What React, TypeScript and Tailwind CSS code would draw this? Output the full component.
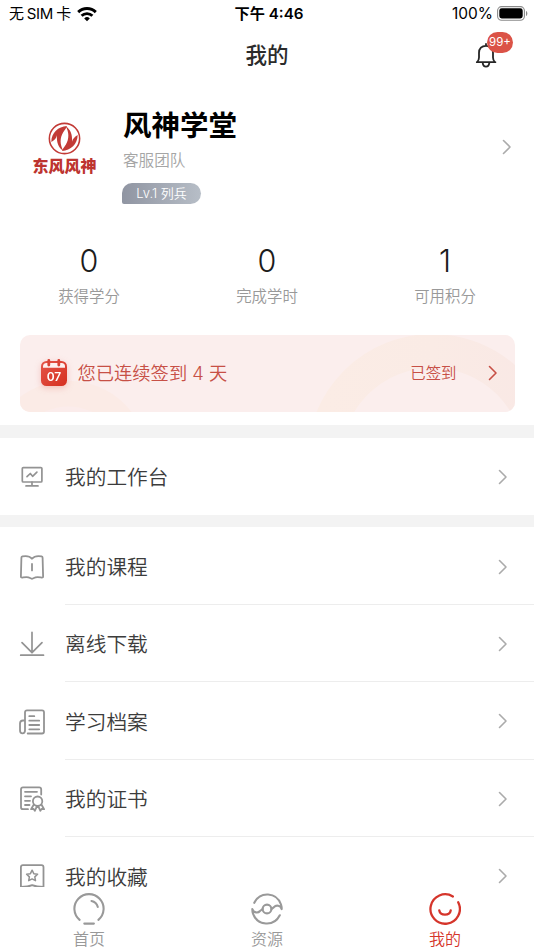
import React from "react";

type IconProps = { className?: string };

const stroke = {
  fill: "none",
  stroke: "currentColor",
  strokeLinecap: "round" as const,
  strokeLinejoin: "round" as const,
};

function Chevron({ className = "" }: IconProps) {
  return (
    <svg viewBox="0 0 10 16" className={`h-4 w-2.5 ${className}`} {...stroke} strokeWidth={1.6}>
      <path d="M1.5 1.5 8 8l-6.5 6.5" />
    </svg>
  );
}

function Wifi() {
  return (
    <svg viewBox="0 0 20 16" className="h-4 w-5" fill="none" stroke="black" strokeWidth={2.9}>
      <path d="M1.2 6.1a12.6 12.6 0 0 1 17.6 0" />
      <path d="M4.6 9.8a7.8 7.8 0 0 1 10.8 0" />
      <path d="M10 15.2 7.2 12.4a4 4 0 0 1 5.6 0z" fill="black" stroke="none" />
    </svg>
  );
}

function Battery() {
  return (
    <svg viewBox="0 0 32 15" className="h-[15px] w-8">
      <rect x=".6" y=".6" width="26.8" height="13.6" rx="4" fill="none" stroke="#8a8a8a" strokeWidth="1.1" />
      <rect x="2.3" y="2.3" width="23.4" height="10.2" rx="2.4" fill="#000" />
      <path d="M29 5v5c1.8-.6 1.8-4.4 0-5z" fill="#8a8a8a" />
    </svg>
  );
}

function Bell() {
  return (
    <svg viewBox="0 0 22 26" className="h-[26px] w-[22px] text-[#262626]" {...stroke} strokeWidth={1.8}>
      <path d="M1.8 20.2h18.6M2.2 19.9c1.4-1.3 1.8-2.4 1.8-4.3v-4.8c0-4.2 2.7-7 7-7s7 2.8 7 7v4.8c0 1.9.4 3 1.8 4.3M11 3.5V2M7.7 20.8c.3 2.6 1.5 3.8 3.3 3.8s3-1.2 3.3-3.8" />
    </svg>
  );
}

function Logo() {
  return (
    <svg viewBox="0 0 34 34" className="h-[33px] w-[33px]">
      <circle cx="17" cy="17" r="15.6" fill="none" stroke="#c23a36" strokeWidth="1.6" />
      <path d="M19.5 4.2C10.5 4.8 3.6 11 3.4 20.6 7 18.4 8.6 16.5 9.2 13.6c-.4 6.8 1.2 12.6 6.6 16-3.6-6.3-3.8-12.8-.1-19C17 8.3 18.8 7 19.5 4.2z" fill="#c23a36" />
      <path d="M14.5 29.8c9-.6 15.9-6.8 16.1-16.4-3.6 2.2-5.2 4.1-5.8 7 .4-6.8-1.2-12.6-6.6-16 3.6 6.3 3.8 12.8.1 19-1.3 2.3-3.1 3.6-3.8 6.4z" fill="#c23a36" />
    </svg>
  );
}

function CalendarIcon() {
  return (
    <svg viewBox="0 0 28 30" className="h-[30px] w-7 drop-shadow-[0_2px_3px_rgba(220,70,60,0.25)]">
      <defs>
        <linearGradient id="calendar" x1="0" y1="0" x2="1" y2="1">
          <stop offset="0" stopColor="#e45649" />
          <stop offset="1" stopColor="#d62f20" />
        </linearGradient>
      </defs>
      <rect x="1" y="3" width="26" height="25" rx="5.5" fill="url(#calendar)" />
      <path d="M3 9.8V8.5Q3 5 6.5 5h15Q25 5 25 8.5v1.3z" fill="#fdf1ef" />
      <path d="M8.8 2.5v4.5M18.8 2.5v4.5" stroke="#da4436" strokeWidth="2.8" strokeLinecap="round" />
      <text x="14" y="23" textAnchor="middle" className="font-['Inter'] text-[12px] font-semibold" fill="#fff">07</text>
    </svg>
  );
}

function WorkIcon() {
  return (
    <svg viewBox="0 0 26 26" className="h-[26px] w-[26px]" {...stroke} strokeWidth={1.7}>
      <rect x="3.3" y="3.6" width="19.6" height="14.4" rx="1" />
      <path d="M8 12.7 11.3 9.5l2.3 2.8 4.3-4.1M13 18v3.4M7 21.9h12" />
    </svg>
  );
}

function BookIcon() {
  return (
    <svg viewBox="0 0 26 26" className="h-[26px] w-[26px]" {...stroke} strokeWidth={1.8}>
      <path d="M13 4.7C10.5 1.8 6.8 1.7 3.4 2.4Q2.4 2.6 2.4 3.8L1.9 22.4q0 1.4 1.4 1.2c2.8-.5 5.3-1.2 7.7.3q2 1.6 4 0c2.4-1.5 4.9-.8 7.7-.3q1.4.2 1.4-1.2l-.5-18.6q0-1.2-1-1.4c-3.4-.7-7.1-.6-9.6 2.3zM13 10v6.4" />
    </svg>
  );
}

function DownloadIcon() {
  return (
    <svg viewBox="0 0 26 26" className="h-[26px] w-[26px]" {...stroke} strokeWidth={1.7}>
      <path d="M13 1.3v20.4M3 11.6l10 10 10-10M1.7 24.2h22.8" />
    </svg>
  );
}

function ArchiveIcon() {
  return (
    <svg viewBox="0 0 26 26" className="h-[26px] w-[26px]" {...stroke} strokeWidth={1.8}>
      <path d="M6 22V3.3q0-2 2-2h15q2 0 2 2v19.2q0 2-2 2H8.7M5.8 11.5H4q-3 0-3 3v6.7c0 4.2 5 4.2 5 0V11.5M10.3 7.2h5M10.3 11.7h9.9M10.3 16h9.9M10.3 20.3h9.9" />
    </svg>
  );
}

function CertificateIcon() {
  return (
    <svg viewBox="0 0 26 26" className="h-[26px] w-[26px]" {...stroke} strokeWidth={1.8}>
      <path d="M22.2 8.5V3.4q0-2-2-2H4q-2 0-2 2v17.8q0 2 2 2h5M6 5.8h12M6 10.3h6M6 14.8h5M6 19h4.5" />
      <circle cx="18.6" cy="15.2" r="4.7" />
      <path d="m14.8 18.5-2.7 4.7 2.5-.3 1.2 2 2.1-4.6M22.4 18.5l2.7 4.7-2.5-.3-1.2 2-2.1-4.6" />
    </svg>
  );
}

function FavoriteIcon() {
  return (
    <svg viewBox="0 0 26 26" className="h-[26px] w-[26px]" {...stroke} strokeWidth={1.8}>
      <path d="M1.9 23V3.2q0-2 2-2h18.6q2 0 2 2V23c-4 0-8-.4-11.3-1.8C9.9 22.6 5.9 23 1.9 23z" />
      <path d="m13.1 6.2 1.7 3.5 3.8.5-2.8 2.7.7 3.8-3.4-1.8-3.4 1.8.7-3.8-2.8-2.7 3.8-.5z" strokeWidth={1.5} />
    </svg>
  );
}

function HomeIcon() {
  return (
    <svg viewBox="0 0 32 32" className="h-8 w-8" {...stroke} strokeWidth={2.1}>
      <path d="M6.6 26.9a14.6 14.6 0 1 1 18.8 0" />
      <path d="M18.5 8q5 1 6.3 6M11.3 30.6h9.6" />
    </svg>
  );
}

function ResourceIcon() {
  return (
    <svg viewBox="0 0 32 32" className="h-8 w-8" {...stroke} strokeWidth={2.1}>
      <path d="M3.3 9.8C9-2 25.5-1.2 30 11.5q.7 2 .7 4.6c-1.2-4-5.7-4.4-7.7-2l-2.6 2" />
      <path d="M28.8 22.3C23 34 6.5 33 2 20.6q-.7-2-.7-4.6c1.2 4 5.7 4.4 7.7 2l2.6-2" />
      <circle cx="16" cy="16" r="4.4" />
    </svg>
  );
}

function MineIcon() {
  return (
    <svg viewBox="0 0 32 32" className="h-8 w-8" {...stroke} strokeWidth={2.3}>
      <path d="M23.9 3.5A14.7 14.7 0 1 0 29.2 9.2M10.3 17.5c1 5.6 10.4 5.6 11.4 0" />
    </svg>
  );
}

function MenuRow({ label, icon, line = false }: { label: string; icon: React.ReactNode; line?: boolean }) {
  return (
    <div className="flex h-[77.4px] shrink-0 pl-[19px] text-[#939393]">
      <div className="flex w-[46px] items-center pt-[2px]">{icon}</div>
      <div className={`flex flex-1 items-center justify-between border-b pt-[2px] pr-[26px] ${line ? "border-[#ededed]" : "border-transparent"}`}>
        <span className="pt-[3px] text-[20.7px] leading-7 text-[#3c3c3c]">{label}</span>
        <Chevron className="text-[#ababab]" />
      </div>
    </div>
  );
}

const stats = [
  ["0", "获得学分"],
  ["0", "完成学时"],
  ["1", "可用积分"],
];

const courses = [
  { label: "我的课程", icon: <BookIcon /> },
  { label: "离线下载", icon: <DownloadIcon /> },
  { label: "学习档案", icon: <ArchiveIcon /> },
  { label: "我的证书", icon: <CertificateIcon /> },
  { label: "我的收藏", icon: <FavoriteIcon /> },
];

const tabs = [
  { label: "首页", icon: <HomeIcon />, color: "text-[#999]" },
  { label: "资源", icon: <ResourceIcon />, color: "text-[#999]" },
  { label: "我的", icon: <MineIcon />, color: "text-[#d5352b]" },
];

export default function App() {
  return (
    <div className="flex h-[950px] w-[534px] flex-col overflow-hidden bg-white font-['Inter','Noto_Sans_CJK_SC',sans-serif] font-[350]">
      <div className="grid h-[27px] shrink-0 grid-cols-3 items-center pr-[5px] pl-[9px] text-[15.5px] leading-5 font-normal text-black">
        <div className="flex items-center gap-[6px]">
          <span className="text-[15px] tracking-[-0.25px] whitespace-nowrap [word-spacing:-1px]">无 SIM 卡</span>
          <Wifi />
        </div>
        <span className="text-center text-[15.2px] font-semibold">下午 4:46</span>
        <div className="flex items-center justify-end gap-1">
          <span className="text-[15.5px]">100%</span>
          <Battery />
        </div>
      </div>

      <header className="grid h-[56px] shrink-0 grid-cols-[1fr_auto_1fr] items-center">
        <span />
        <h1 className="text-[21.5px] leading-7 font-medium text-[#2b2b2b]">我的</h1>
        <div className="relative mr-[37px] justify-self-end">
          <Bell />
          <span className="absolute -top-[10px] left-[12px] flex h-[21px] w-[26px] items-center justify-center rounded-full bg-[#db5347] text-[11.5px] font-normal text-white">99+</span>
        </div>
      </header>

      <main className="flex min-h-0 flex-1 flex-col overflow-hidden">
        <section className="flex h-[147px] shrink-0 items-start pt-[24px] pr-[22px] pl-[32px]">
          <div className="flex w-[65px] flex-col items-center pt-[15px]">
            <Logo />
            <span className="mt-[1px] text-[16px] leading-5 font-black text-[#bd3430]">东风风神</span>
          </div>
          <div className="ml-[26px] flex-1">
            <div className="text-[28.5px] leading-[38px] font-bold text-black">风神学堂</div>
            <div className="mt-[4px] text-[15.6px] leading-6 text-[#a5a5a5]">客服团队</div>
            <div className="mt-[10px] -ml-px flex h-[21px] w-[79px] items-center justify-center rounded-[10px_10.5px_10.5px_2px] bg-linear-to-r from-[#9095a2] to-[#b7bec7] text-[13px] text-white">Lv.1 列兵</div>
          </div>
          <Chevron className="mt-[32px] text-[#ababab]" />
        </section>

        <section className="grid h-[105px] shrink-0 grid-cols-3 text-center">
          {stats.map(([value, label]) => (
            <div key={label} className="pt-[13px]">
              <div className="text-[30.5px] leading-9 font-light text-[#1c1c1c]">{value}</div>
              <div className="mt-[6px] text-[15.4px] leading-6 text-[#999]">{label}</div>
            </div>
          ))}
        </section>

        <section className="relative mx-[19.5px] mb-[13.5px] flex h-[76.5px] shrink-0 items-center overflow-hidden rounded-[10px] bg-[#fbeeed] pr-[17px] pl-5 text-[#c75046]">
          <svg viewBox="0 0 495 77" className="absolute inset-0 h-full w-full">
            <defs>
              <linearGradient id="arc" x1="0" x2="1">
                <stop offset="0" stopColor="#fbece5" />
                <stop offset=".5" stopColor="#faebe5" />
                <stop offset="1" stopColor="#f9e8e5" />
              </linearGradient>
            </defs>
            <circle cx="47" cy="126" r="80" fill="#fbebe6" />
            <circle cx="47" cy="128" r="56" fill="#fbeceb" />
            <circle cx="413.5" cy="125" r="109" fill="none" stroke="url(#arc)" strokeWidth="34" />
          </svg>
          <div className="relative flex w-full items-center">
            <CalendarIcon />
            <span className="ml-[10px] text-[18.3px] leading-7">您已连续签到 4 天</span>
            <span className="mr-[31px] ml-auto pt-px text-[15.4px]">已签到</span>
            <Chevron />
          </div>
        </section>

        <div className="h-[12.5px] shrink-0 bg-[#f3f3f3]" />
        <MenuRow label="我的工作台" icon={<WorkIcon />} />
        <div className="h-[12.5px] shrink-0 bg-[#f3f3f3]" />
        {courses.map((item) => (
          <MenuRow key={item.label} {...item} line />
        ))}
      </main>

      <nav className="grid h-[63px] shrink-0 grid-cols-3 bg-white pt-[6px]">
        {tabs.map(({ label, icon, color }) => (
          <div key={label} className={`flex flex-col items-center ${color}`}>
            {icon}
            <span className="mt-[2px] text-[16px] leading-6">{label}</span>
          </div>
        ))}
      </nav>
    </div>
  );
}
